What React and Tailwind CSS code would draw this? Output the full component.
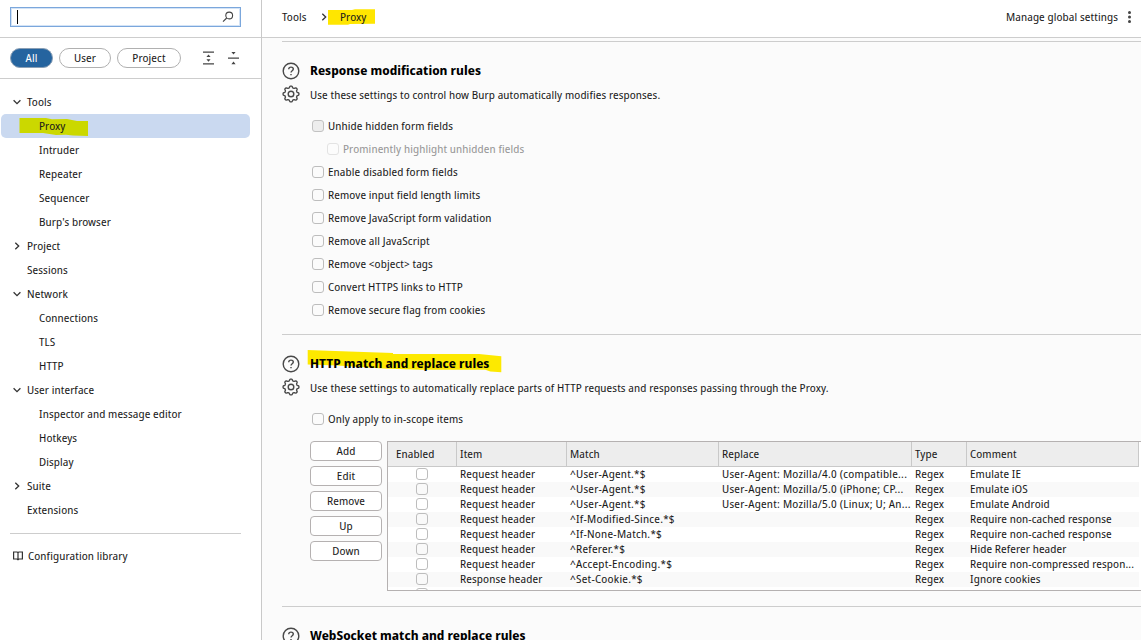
import React from 'react';

const tree = [
  { label: 'Tools', open: true },
  { label: 'Proxy', child: true, selected: true },
  { label: 'Intruder', child: true },
  { label: 'Repeater', child: true },
  { label: 'Sequencer', child: true },
  { label: "Burp's browser", child: true },
  { label: 'Project', closed: true },
  { label: 'Sessions' },
  { label: 'Network', open: true },
  { label: 'Connections', child: true },
  { label: 'TLS', child: true },
  { label: 'HTTP', child: true },
  { label: 'User interface', open: true },
  { label: 'Inspector and message editor', child: true },
  { label: 'Hotkeys', child: true },
  { label: 'Display', child: true },
  { label: 'Suite', closed: true },
  { label: 'Extensions' },
];

const rows = [
  ['Request header', '^User-Agent.*$', 'User-Agent: Mozilla/4.0 (compatible...', 'Regex', 'Emulate IE'],
  ['Request header', '^User-Agent.*$', 'User-Agent: Mozilla/5.0 (iPhone; CP...', 'Regex', 'Emulate iOS'],
  ['Request header', '^User-Agent.*$', 'User-Agent: Mozilla/5.0 (Linux; U; An...', 'Regex', 'Emulate Android'],
  ['Request header', '^If-Modified-Since.*$', '', 'Regex', 'Require non-cached response'],
  ['Request header', '^If-None-Match.*$', '', 'Regex', 'Require non-cached response'],
  ['Request header', '^Referer.*$', '', 'Regex', 'Hide Referer header'],
  ['Request header', '^Accept-Encoding.*$', '', 'Regex', 'Require non-compressed respon...'],
  ['Response header', '^Set-Cookie.*$', '', 'Regex', 'Ignore cookies'],
  ['Request header', '^Host: foo.example.org$', 'Host: bar.example.org', 'Regex', 'Rewrite Host header'],
];

const options = [
  { label: 'Unhide hidden form fields', filled: true },
  { label: 'Prominently highlight unhidden fields', disabled: true },
  { label: 'Enable disabled form fields' },
  { label: 'Remove input field length limits' },
  { label: 'Remove JavaScript form validation' },
  { label: 'Remove all JavaScript' },
  { label: 'Remove <object> tags' },
  { label: 'Convert HTTPS links to HTTP' },
  { label: 'Remove secure flag from cookies' },
];

function Chevron({ right }) {
  return (
    <svg className="size-2 shrink-0" viewBox="0 0 8 8" fill="none" stroke="#333" strokeWidth="1.3">
      <path d={right ? 'M2.3 .8 5.7 4 2.3 7.2' : 'M.6 2.3 4 5.7 7.4 2.3'} />
    </svg>
  );
}

function HelpIcon() {
  return (
    <svg className="size-[18px] shrink-0" viewBox="0 0 18 18" fill="none" stroke="#484848" strokeWidth="1.4">
      <circle cx="9" cy="9" r="7.8" />
      <path d="M6.7 7.2C6.8 5.8 7.7 5.1 9 5.1c1.400 0 2.300.8 2.300 2 0 1.700-2.300 1.700-2.300 3.500" />
      <path d="M9 11.900v1.400" />
    </svg>
  );
}

// Outline of an eight-toothed cog with rounded lobes, centred on (9, 9).
const cog = Array.from({ length: 96 }, (_, i) => {
  const angle = (i / 96) * Math.PI * 2;
  const radius = 7.1 + 0.85 * Math.tanh(2 * Math.cos(8 * angle));
  return `${(9 + radius * Math.cos(angle)).toFixed(2)},${(9 + radius * Math.sin(angle)).toFixed(2)}`;
}).join(' ');

function GearIcon() {
  return (
    <svg className="size-[18px] shrink-0 -translate-y-px" viewBox="0 0 18 18" fill="none" stroke="#484848" strokeWidth="1.4" strokeLinejoin="round">
      <circle cx="9" cy="9" r="2.800" />
      <polygon points={cog} />
    </svg>
  );
}

function Checkbox({ filled, disabled }) {
  const tone = disabled ? 'border-[#e3e3e3] bg-[#fcfcfc]' : filled ? 'border-[#c2c2c2] bg-[#ededed]' : 'border-[#bdbdbd]';
  return <span className={`size-3 shrink-0 rounded-[3px] border ${tone}`} />;
}

function Option({ label, filled, disabled }) {
  return (
    <label className={`flex h-[23px] items-center gap-1 ${disabled ? 'pl-[45px] text-[#979797]' : 'pl-[30px]'}`}>
      <Checkbox filled={filled} disabled={disabled} />
      <span className="whitespace-pre">{label}</span>
    </label>
  );
}

function Section({ title, description, marked, className, children }) {
  return (
    <section className={`ml-5 shrink-0 border-t border-[#cdcdcd] pt-[17px] ${className}`}>
      <div className="flex h-6 items-center gap-[10px]">
        <HelpIcon />
        <h2 className="relative text-[12.6px] leading-6 font-bold tracking-[0.03px] font-stretch-normal text-black">
          {marked && (
            <svg className="absolute -top-[2px] -left-[3px] h-[23px] w-[195px]" viewBox="0 0 195 23" fill="#fde900">
              <path d="M.7 0 42 1.500l44 1.500 0 1H172l22.300 2.300v16l-11-.8-5-1.700H112l-36-1.200L30 15.500.7 14.500z" />
            </svg>
          )}
          <span className="relative block whitespace-nowrap">{title}</span>
        </h2>
      </div>
      <div className="flex h-[23px] items-center gap-[10px]">
        <GearIcon />
        <p className="whitespace-nowrap">{description}</p>
      </div>
      <div className="pt-2">{children}</div>
    </section>
  );
}

const grid = 'grid grid-cols-[69px_110px_152px_193px_55px_172px]';

function RulesTable() {
  return (
    <div className="h-[150px] min-w-0 flex-1 overflow-hidden border border-r-0 border-[#b5b1b1] bg-white">
      <div className={`${grid} h-[25px] w-[751px] border-b border-[#c9c9c9] bg-[#ededed]`}>
        {['Enabled', 'Item', 'Match', 'Replace', 'Type', 'Comment'].map((name, i) => (
          <div key={name} className={`flex items-center border-r border-[#c9c9c9] ${i ? 'pl-[3px]' : 'pl-2'}`}>
            {name}
          </div>
        ))}
      </div>
      {rows.map((row, i) => (
        <div key={i} className={`${grid} h-[15px] w-[751px] leading-[14px] ${i % 2 ? 'bg-[#f9f9f9]' : ''}`}>
          <div className="flex items-start justify-center pt-px pr-px">
            <Checkbox />
          </div>
          {row.map((cell, j) => (
            <div key={j} className={`pl-[3px] whitespace-nowrap ${j === 1 || j === 2 ? 'tracking-[0.25px]' : ''}`}>
              {cell}
            </div>
          ))}
        </div>
      ))}
    </div>
  );
}

export default function App() {
  return (
    <div className="flex h-[640px] w-[1141px] overflow-hidden bg-white font-['Noto_Sans_Display','Noto_Sans',sans-serif] text-[11.5px] leading-4 tracking-[0.12px] text-[#1b1b1b] font-stretch-semi-condensed">
      <aside className="flex w-[262px] shrink-0 flex-col border-r border-[#c9c9c9]">
        <div className="flex h-[38px] shrink-0 border-b border-[#cdcdcd] pt-[7px] pl-[10px]">
          <div className="flex h-5 w-[231px] items-center justify-between border border-[#7ba7dc] pr-[6px] pl-[6px] shadow-[inset_0_0_0_1px_#d3e3f6]">
            <span className="h-[14px] w-px bg-black" />
            <svg className="size-3" viewBox="0 0 12 12" fill="none" stroke="#444" strokeWidth="1.100">
              <circle cx="7.200" cy="4.500" r="3.400" />
              <path d="M4.700 7 1 10.700" />
            </svg>
          </div>
        </div>
        <div className="flex h-[41px] shrink-0 items-center border-b border-[#cdcdcd]">
          <div className="ml-[10px] flex h-5 w-[43px] items-center justify-center rounded-full border border-[#8a9fb5] bg-[#25649f] text-white">All</div>
          <div className="ml-[6px] flex h-5 w-[52px] items-center justify-center rounded-full border border-[#b0b0b0]">User</div>
          <div className="ml-[6px] flex h-5 w-[64px] items-center justify-center rounded-full border border-[#b0b0b0]">Project</div>
          <svg className="ml-[22px] h-[14px] w-[11px]" viewBox="0 0 11 14" fill="#444">
            <path d="M0 .5h11v1.200H0zM0 12.300h11v1.200H0zM5.500 3.400 7.600 6H3.400zM5.500 10.800 7.600 8.200H3.400z" />
          </svg>
          <svg className="ml-[14px] h-[14px] w-[11px]" viewBox="0 0 11 14" fill="#444">
            <path d="M0 6.500h11v1.200H0zM5.500 3.600 7.600 1H3.400zM5.500 10.600 7.600 13.200H3.400z" />
          </svg>
        </div>
        <nav className="mt-[11px] flex flex-col">
          {tree.map((item) => (
            <div
              key={item.label}
              className={`relative ml-px flex h-6 w-[249px] items-center gap-[6px] rounded-[5px] ${item.child ? 'pl-[38px]' : item.open || item.closed ? 'pl-3' : 'pl-[26px]'} ${item.selected ? 'bg-[#cad9f0]' : ''}`}
            >
              {item.selected && (
                <svg className="absolute top-1 left-[18px] h-[18px] w-[69px]" viewBox="0 0 69 18" fill="#cbd800">
                  <path d="M.5 0H27l6 1.300 15-.3 10 2h11v15l-15-.4-7-.9-10 .4L24 15H.5z" />
                </svg>
              )}
              {(item.open || item.closed) && <Chevron right={item.closed} />}
              <span className="relative">{item.label}</span>
            </div>
          ))}
        </nav>
        <div className="mt-[11px] ml-[10px] w-[231px] border-t border-[#cdcdcd]" />
        <div className="mt-[14px] ml-[13px] flex items-center gap-[5px]">
          <svg className="h-[10px] w-[10px]" viewBox="0 0 10 10" fill="none" stroke="#333" strokeWidth="1.200">
            <path d="M.6 1H4l1 .6L6 1h3.400v7H6l-1 .8L4 8H.6zM5 1.600v7.200" />
          </svg>
          <span>Configuration library</span>
        </div>
      </aside>

      <main className="flex min-w-0 flex-1 flex-col bg-[#fbfbfb]">
        <header className="flex h-[38px] shrink-0 items-center border-b border-[#cdcdcd] bg-white pr-[10px] pb-[3px] pl-5">
          <span className="w-[26px]">Tools</span>
          <span className="ml-3 flex">
            <Chevron right />
          </span>
          <span className="relative ml-[12px]">
            <svg className="absolute top-0 -left-[12px] h-4 w-[47px]" viewBox="0 0 47 16" fill="#ffe600">
              <path d="M0 1 24 1 27 .2H47V14.800L22 15l-2 .7H0z" />
            </svg>
            <span className="relative">Proxy</span>
          </span>
          <span className="ml-auto">Manage global settings</span>
          <svg className="ml-[10px] h-3 w-[3px]" viewBox="0 0 3 12" fill="#444">
            <circle cx="1.500" cy="1.500" r="1.500" />
            <circle cx="1.500" cy="6" r="1.500" />
            <circle cx="1.500" cy="10.500" r="1.500" />
          </svg>
        </header>

        <Section
          title="Response modification rules"
          description="Use these settings to control how Burp automatically modifies responses."
          className="mt-[3px] h-[293px]"
        >
          {options.map((option) => (
            <Option key={option.label} {...option} />
          ))}
        </Section>

        <Section
          title="HTTP match and replace rules"
          description="Use these settings to automatically replace parts of HTTP requests and responses passing through the Proxy."
          className="h-[272px]"
          marked
        >
          <Option label="Only apply to in-scope items" />
          <div className="mt-[11px] flex pl-7">
            <div className="mr-[5px] flex w-[72px] shrink-0 flex-col gap-[5px]">
              {['Add', 'Edit', 'Remove', 'Up', 'Down'].map((name) => (
                <button key={name} className="flex h-5 items-center justify-center rounded-[4px] border border-[#b5b1b1] bg-white">
                  {name}
                </button>
              ))}
            </div>
            <RulesTable />
          </div>
        </Section>

        <Section
          title="WebSocket match and replace rules"
          description="Use these settings to automatically replace parts of WebSocket messages passing through the Proxy."
          className="h-[200px]"
        />
      </main>
    </div>
  );
}
